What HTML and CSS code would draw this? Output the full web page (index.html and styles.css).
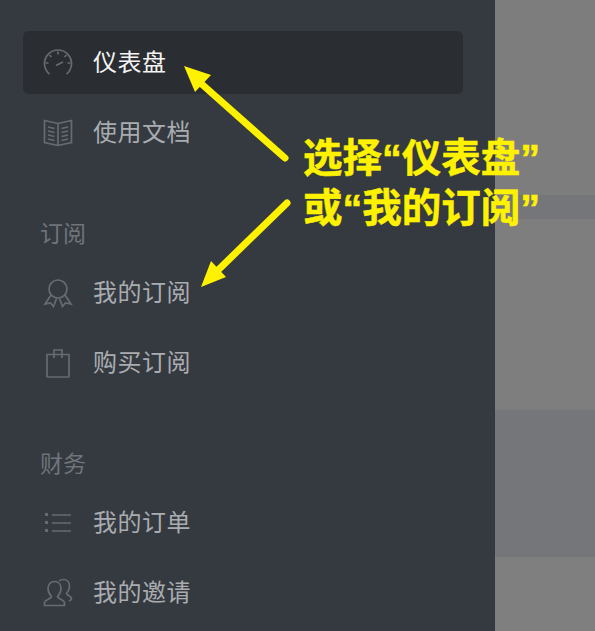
FILE: index.html
```html
<!DOCTYPE html>
<html lang="zh-CN">
<head>
<meta charset="utf-8">
<title>仪表盘</title>
<link rel="stylesheet" href="styles.css">
</head>
<body>
<div class="page">
  <aside class="sidebar">
    <nav class="group">
      <a class="item active">
        <svg class="icon" viewBox="0 0 30 30"><path d="M6.500 26A13.500 13.500 0 1 1 23.500 26"/><path d="M15 3.500v3M6.500 7l2 2M23.500 7l-2 2M2.500 15h3M24.500 15h3"/><path d="M13 17.500l7-3.500"/></svg>
        <span class="text">仪表盘</span>
      </a>
      <a class="item">
        <svg class="icon" viewBox="0 0 30 30"><path d="M1.500 2.500l13.500 3 13.500-3v22l-13.500 3-13.500-3zM15 5.500v22"/><path d="M5 9l6.500 1.500M5 13l6.500 1.500M5 17l6.500 1.500M5 21l6.500 1.500M25 9l-6.500 1.500M25 13l-6.500 1.500M25 17l-6.500 1.500M25 21l-6.500 1.500"/></svg>
        <span class="text">使用文档</span>
      </a>
    </nav>
    <section class="group section">
      <h2 class="label">订阅</h2>
      <a class="item">
        <svg class="icon" viewBox="0 0 30 30"><circle cx="15" cy="11" r="9"/><path d="M8 17L2 26l5.500-1 3 3.500 3-8M22 17l6 9-5.500-1-3 3.500-3-8"/></svg>
        <span class="text">我的订阅</span>
      </a>
      <a class="item">
        <svg class="icon" viewBox="0 0 30 30"><path d="M4 6.500h22v21.500a1 1 0 0 1-1 1H5a1 1 0 0 1-1-1z"/><path d="M11 10V2h8v8"/></svg>
        <span class="text">购买订阅</span>
      </a>
    </section>
    <section class="group section">
      <h2 class="label">财务</h2>
      <a class="item">
        <svg class="icon" viewBox="0 0 30 30"><path class="dots" d="M2 6.500h3M2 14.500h3M2 22.500h3"/><path d="M9 7h19M9 15h19M9 23h19"/></svg>
        <span class="text">我的订单</span>
      </a>
      <a class="item">
        <svg class="icon" viewBox="0 0 30 30"><path d="M1.500 27.500v-3c0-2.500 6.500-3.500 7-6-3-3-3.500-5-3.500-8 0-4 2.500-7 6.500-7s6.500 3 6.500 7c0 3-.5 5-3.500 8 .5 2.500 7 3.500 7 6v3z"/><path d="M16 3c1-1 3-1.500 4.500-1.500 4 0 6 3 6 6.500 0 3-.5 5-3 7.500.5 2 5 2.500 5 5.500 0 1-1 1.500-2.500 2"/></svg>
        <span class="text">我的邀请</span>
      </a>
    </section>
  </aside>
  <main class="backdrop">
    <div class="band b1"></div>
    <div class="band b2"></div>
    <div class="band b3"></div>
    <div class="band b4"></div>
    <div class="band b5"></div>
  </main>
  <svg class="arrows" viewBox="0 0 595 631">
    <path class="shaft" d="M285 158L196 79"/>
    <path class="head" d="M184 66L211 75 195 92z"/>
    <path class="shaft" d="M287 203L213 275"/>
    <path class="head" d="M201 287L211 261 226 277z"/>
  </svg>
  <p class="note">选择“仪表盘”<br>或“我的订阅”</p>
</div>
</body>
</html>
```
FILE: styles.css
```css
* {
  box-sizing: border-box;
}

html,
body {
  margin: 0;
  height: 100%;
}

body {
  font-family: "Noto Sans CJK SC", "Noto Sans", sans-serif;
  overflow: hidden;
}

.page {
  position: relative;
  display: flex;
  width: 595px;
  height: 631px;
  overflow: hidden;
}

.sidebar {
  flex: 0 0 495px;
  padding: 31px 32px 0 23px;
  background: #353a40;
}

.group {
  display: flex;
  flex-direction: column;
  gap: 7px;
}

.section {
  margin-top: 54px;
}

.label {
  height: 30px;
  margin: 0 0 6px;
  padding-left: 17px;
  color: #6f747b;
  font-size: 23px;
  font-weight: 400;
  line-height: 28px;
}

.item {
  display: flex;
  align-items: center;
  gap: 20px;
  height: 63px;
  padding-left: 20px;
  border-radius: 6px;
  color: #a9acb0;
  font-size: 24px;
  letter-spacing: 0.500px;
}

.text {
  padding-bottom: 5px;
}

.active {
  background: #2a2d31;
  color: #f4f4f4;
}

.icon {
  flex: none;
  width: 30px;
  height: 30px;
  fill: none;
  stroke: #666b72;
  stroke-width: 1.700;
}

.icon .dots {
  stroke-width: 3;
}

.backdrop {
  flex: 1;
  display: flex;
  flex-direction: column;
}

.band {
  flex: none;
}

.b1 {
  height: 195px;
  background: #7d7d7d;
}

.b2 {
  height: 24px;
  background: #74767a;
}

.b3 {
  height: 191px;
  background: #7e7e7e;
}

.b4 {
  height: 147px;
  background: #75767a;
}

.b5 {
  height: 74px;
  background: #7f7f7f;
}

.arrows {
  position: absolute;
  inset: 0;
  width: 595px;
  height: 631px;
}

.shaft {
  fill: none;
  stroke: #fff200;
  stroke-width: 7;
  stroke-linecap: round;
}

.head {
  fill: #fff200;
}

.note {
  position: absolute;
  left: 303px;
  top: 133px;
  margin: 0;
  color: #fff200;
  font-family: "Liberation Sans", "Noto Sans CJK SC", sans-serif;
  font-size: 39.500px;
  font-weight: 700;
  line-height: 50px;
  white-space: nowrap;
  -webkit-text-stroke: 0.500px #fff200;
}
```
